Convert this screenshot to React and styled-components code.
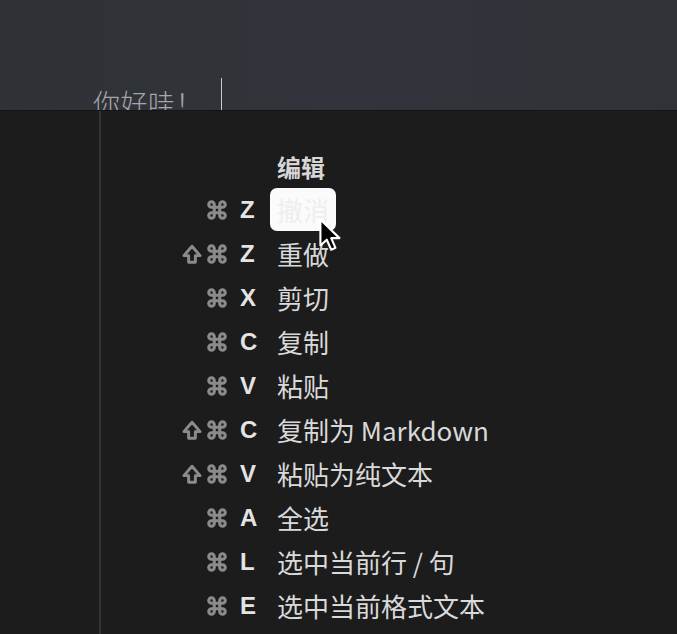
import React from 'react';
import styled, { createGlobalStyle } from 'styled-components';

const Global = createGlobalStyle`
  html, body { margin: 0; padding: 0; }
  body {
    width: 677px;
    height: 634px;
    overflow: hidden;
    background: #1c1c1d;
    font-family: "Noto Sans CJK SC", "Noto Sans", sans-serif;
  }
`;

const Editor = styled.div`
  height: 111px;
  box-sizing: border-box;
  padding: 78px 0 0 93px;
  overflow: hidden;
  background: linear-gradient(90deg, #2e3135 0%, #31343a 50%, #2f3237 100%);
  border-bottom: 1px solid #151516;
  display: flex;
  align-items: flex-start;
`;

const Line = styled.span`
  font-size: 27px;
  font-weight: 300;
  line-height: 50px;
  color: #a3a6ab;
  letter-spacing: 0.5px;
`;

const Caret = styled.span`
  display: inline-block;
  width: 1px;
  height: 34px;
  margin: 0 0 0 18px;
  background: #c9cacc;
`;

const Panel = styled.div`
  display: flex;
  height: 523px;
`;

const Gutter = styled.div`
  width: 99px;
  flex: none;
  border-right: 2px solid #333335;
`;

const Menu = styled.div`
  position: relative;
  display: grid;
  grid-template-columns: 157px auto;
  grid-auto-rows: 44px;
  column-gap: 12px;
  align-content: start;
  padding-top: 33px;
`;

const Title = styled.div`
  grid-column: 2;
  padding-left: 7px;
  display: flex;
  align-items: center;
  font-size: 24px;
  font-weight: 700;
  color: #d6d6d6;
`;

const Keys = styled.div`
  display: flex;
  align-items: center;
  justify-content: flex-end;
  gap: 3px;
  color: #8b8b8d;
`;

const Letter = styled.span`
  width: 18px;
  margin-left: 9px;
  font-family: "Liberation Sans", "Noto Sans", sans-serif;
  font-size: 24px;
  font-weight: 700;
  color: #e4e4e4;
  text-align: left;
`;

const Label = styled.div`
  justify-self: start;
  display: flex;
  align-items: center;
  height: 43px;
  padding: 0 7px;
  border-radius: 7px;
  font-size: 26px;
  color: ${({ $active }) => ($active ? '#eeeeee' : '#d9d9d9')};
  background: ${({ $active }) => ($active ? '#fbfbfb' : 'transparent')};
`;

const Pointer = styled.svg`
  position: absolute;
  left: 217px;
  top: 107px;
`;

const Cmd = () => (
  <svg width="22" height="22" viewBox="0 0 24 24" fill="none" stroke="currentColor" strokeWidth="3.4" strokeLinecap="round" strokeLinejoin="round">
    <path d="M15 6v12a3 3 0 1 0 3-3H6a3 3 0 1 0 3 3V6a3 3 0 1 0-3 3h12a3 3 0 1 0-3-3" />
  </svg>
);

const Shift = () => (
  <svg width="22" height="22" viewBox="0 0 24 24" fill="none" stroke="currentColor" strokeWidth="3.2" strokeLinejoin="round">
    <path d="M8.3 21v-7.2H3.2L12 3.5l8.8 10.3h-5.1V21z" />
  </svg>
);

const items = [
  { shift: false, key: 'Z', label: '撤消', active: true },
  { shift: true, key: 'Z', label: '重做' },
  { shift: false, key: 'X', label: '剪切' },
  { shift: false, key: 'C', label: '复制' },
  { shift: false, key: 'V', label: '粘贴' },
  { shift: true, key: 'C', label: '复制为 Markdown' },
  { shift: true, key: 'V', label: '粘贴为纯文本' },
  { shift: false, key: 'A', label: '全选' },
  { shift: false, key: 'L', label: '选中当前行 / 句' },
  { shift: false, key: 'E', label: '选中当前格式文本' },
];

export default function App() {
  return (
    <>
      <Global />
      <Editor>
        <Line>你好哇！</Line>
        <Caret />
      </Editor>
      <Panel>
        <Gutter />
        <Menu>
          <Title>编辑</Title>
          {items.map((it) => (
            <React.Fragment key={it.label}>
              <Keys>
                {it.shift && <Shift />}
                <Cmd />
                <Letter>{it.key}</Letter>
              </Keys>
              <Label $active={it.active}>{it.label}</Label>
            </React.Fragment>
          ))}
          <Pointer width="26" height="36" viewBox="0 0 24 34">
            <path d="M2 1.5 L2 26 L8 20.5 L12.2 30 L16.2 28.2 L12.2 19 L20 19 Z" fill="#000" stroke="#fff" strokeWidth="2" strokeLinejoin="round" />
          </Pointer>
        </Menu>
      </Panel>
    </>
  );
}
